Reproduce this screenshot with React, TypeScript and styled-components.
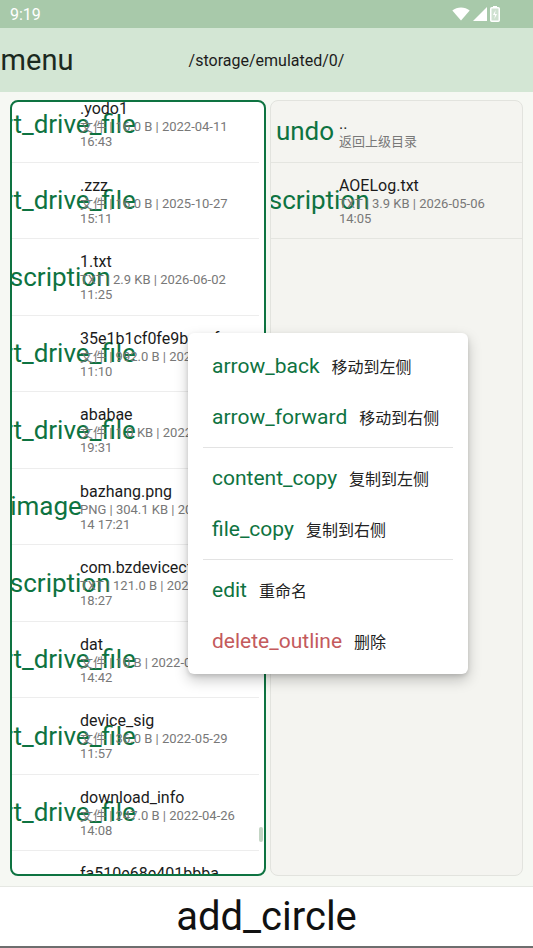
import React, { useEffect, useRef } from "react";
import styled, { createGlobalStyle } from "styled-components";

const GREEN = "#0e7341";
const RED = "#c45a5c";
const FONT = `Roboto, "Noto Sans CJK SC", "Noto Sans", sans-serif`;

const GlobalStyle = createGlobalStyle`
  html, body { margin: 0; padding: 0; }
  body { font-family: ${FONT}; background: #f6f8f3; }
  * { box-sizing: border-box; }
`;

const Screen = styled.div`
  position: relative;
  width: 533px;
  height: 948px;
  display: flex;
  flex-direction: column;
  overflow: hidden;
  background: #f6f8f3;
`;

const StatusBar = styled.div`
  flex: none;
  height: 28px;
  display: flex;
  align-items: center;
  justify-content: space-between;
  padding: 0 33px 0 10px;
  background: #a8c9aa;
  color: #fff;
`;
const Clock = styled.span`
  font-size: 16px;
`;
const StatusIcons = styled.div`
  display: flex;
  align-items: center;
  gap: 3px;
`;

const TopBar = styled.div`
  flex: none;
  height: 64px;
  display: grid;
  grid-template-columns: 74px 1fr 74px;
  align-items: center;
  background: #d3e6d4;
`;
const NavIcon = styled.span`
  display: flex;
  justify-content: center;
  white-space: nowrap;
  font-size: 29px;
  color: #1b2a1e;
`;
const PathTitle = styled.div`
  text-align: center;
  font-size: 16px;
  color: #1c1c1c;
`;

const Panes = styled.div`
  flex: 1;
  min-height: 0;
  display: grid;
  grid-template-columns: 256px 253px;
  gap: 4px;
  padding: 8px 10px 10px;
`;
const Pane = styled.div<{ $active?: boolean }>`
  position: relative;
  min-height: 0;
  overflow: hidden;
  border-radius: 8px;
  background: ${(p) => (p.$active ? "#fff" : "#f4f4f0")};
  border: ${(p) => (p.$active ? `2px solid ${GREEN}` : "1px solid #e2e3de")};
`;
const Scroller = styled.div<{ $gutter?: number }>`
  height: 100%;
  overflow-y: auto;
  scrollbar-width: none;
  padding-right: ${(p) => p.$gutter ?? 0}px;
  &::-webkit-scrollbar {
    display: none;
  }
`;
const ScrollThumb = styled.div`
  position: absolute;
  right: 1px;
  top: 725px;
  width: 4px;
  height: 15px;
  border-radius: 2px;
  background: #c3d5c4;
`;

const Row = styled.div<{ $line: string }>`
  display: flex;
  align-items: center;
  padding: 12.25px 0;
  border-bottom: 1px solid ${(p) => p.$line};
`;
const IconSlot = styled.span`
  flex: none;
  width: 44px;
  margin: 0 12px;
  display: flex;
  justify-content: center;
  white-space: nowrap;
  font-size: 26px;
  line-height: 1;
  color: ${GREEN};
`;
const Info = styled.div`
  flex: 1;
  min-width: 0;
`;
const FileName = styled.div`
  font-size: 16px;
  line-height: 21px;
  color: #1b1b1b;
  white-space: nowrap;
  overflow: hidden;
`;
const Meta = styled.div`
  font-size: 13px;
  line-height: 15px;
  color: #787878;
  white-space: nowrap;
`;

const Menu = styled.div`
  position: absolute;
  left: 188px;
  top: 333px;
  width: 280px;
  padding: 8px 0;
  border-radius: 6px;
  background: #fff;
  box-shadow: 0 6px 14px rgba(0, 0, 0, 0.22), 0 2px 4px rgba(0, 0, 0, 0.12);
  z-index: 10;
`;
const MenuItem = styled.div`
  height: 50.5px;
  display: flex;
  align-items: center;
  gap: 12px;
  padding: 0 24px;
`;
const MenuIcon = styled.span<{ $danger?: boolean }>`
  white-space: nowrap;
  font-size: 21px;
  color: ${(p) => (p.$danger ? RED : GREEN)};
`;
const MenuLabel = styled.span`
  font-size: 16px;
  color: #222;
`;
const MenuDivider = styled.div`
  height: 1px;
  margin: 5px 15px;
  background: #e3e3e3;
`;

const BottomBar = styled.div`
  flex: none;
  height: 62px;
  display: flex;
  align-items: center;
  justify-content: center;
  background: #fff;
  border-top: 1px solid #e6e8e3;
  border-bottom: 2px solid #6e6e6e;
`;
const FabIcon = styled.span`
  font-size: 40px;
  line-height: 1;
  color: #111;
`;

type FileEntry = { icon: string; name: string; meta: string[] };

const leftFiles: FileEntry[] = [
  { icon: "insert_drive_file", name: ".yodo1", meta: ["文件 | 16.0 B | 2022-04-11", "16:43"] },
  { icon: "insert_drive_file", name: ".zzz", meta: ["文件 | 16.0 B | 2025-10-27", "15:11"] },
  { icon: "description", name: "1.txt", meta: ["TXT | 2.9 KB | 2026-06-02", "11:25"] },
  { icon: "insert_drive_file", name: "35e1b1cf0fe9baecfaceae", meta: ["文件 | 992.0 B | 2024-03-18", "11:10"] },
  { icon: "insert_drive_file", name: "ababae", meta: ["文件 | 1.0 KB | 2022-07-15", "19:31"] },
  { icon: "image", name: "bazhang.png", meta: ["PNG | 304.1 KB | 2025-06-", "14 17:21"] },
  { icon: "description", name: "com.bzdevicecfg.txt", meta: ["TXT | 121.0 B | 2025-03-02", "18:27"] },
  { icon: "insert_drive_file", name: "dat", meta: ["文件 | 10 B | 2022-08-16", "14:42"] },
  { icon: "insert_drive_file", name: "device_sig", meta: ["文件 | 36.0 B | 2022-05-29", "11:57"] },
  { icon: "insert_drive_file", name: "download_info", meta: ["文件 | 247.0 B | 2022-04-26", "14:08"] },
  { icon: "insert_drive_file", name: "fa510e68e401bbba", meta: ["文件 | 32.0 B | 2022-04-26", "14:08"] },
];

const rightFiles: FileEntry[] = [
  { icon: "undo", name: "..", meta: ["返回上级目录"] },
  { icon: "description", name: "AOELog.txt", meta: ["TXT | 3.9 KB | 2026-05-06", "14:05"] },
];

const menuGroups = [
  [
    { icon: "arrow_back", label: "移动到左侧" },
    { icon: "arrow_forward", label: "移动到右侧" },
  ],
  [
    { icon: "content_copy", label: "复制到左侧" },
    { icon: "file_copy", label: "复制到右侧" },
  ],
  [
    { icon: "edit", label: "重命名" },
    { icon: "delete_outline", label: "删除", danger: true },
  ],
];

const FileRow = ({ file, line }: { file: FileEntry; line: string }) => (
  <Row $line={line}>
    <IconSlot>{file.icon}</IconSlot>
    <Info>
      <FileName>{file.name}</FileName>
      {file.meta.map((m, i) => (
        <Meta key={i}>{m}</Meta>
      ))}
    </Info>
  </Row>
);

const StatusGlyphs = () => (
  <StatusIcons>
    <svg width="18" height="14" viewBox="0 0 18 14">
      <path d="M9 13.5 L0.3 3.6 A13.5 13.5 0 0 1 17.7 3.6 Z" fill="#fff" />
    </svg>
    <svg width="14" height="14" viewBox="0 0 14 14">
      <path d="M14 0 L14 14 L0 14 Z" fill="#fff" />
    </svg>
    <svg width="10" height="16" viewBox="0 0 10 16">
      <rect x="3" y="0" width="4" height="2" fill="#fff" />
      <rect x="0.75" y="1.75" width="8.5" height="13.5" rx="1" fill="rgba(255,255,255,0.45)" stroke="#fff" strokeWidth="1.5" />
      <path d="M5.6 4 L3 9 H5 L4.4 13 L7 8 H5 Z" fill="#fff" />
    </svg>
  </StatusIcons>
);

export default function App() {
  const leftRef = useRef<HTMLDivElement>(null);

  useEffect(() => {
    if (leftRef.current) leftRef.current.scrollTop = 16;
  }, []);

  return (
    <Screen>
      <GlobalStyle />
      <StatusBar>
        <Clock>9:19</Clock>
        <StatusGlyphs />
      </StatusBar>
      <TopBar>
        <NavIcon>menu</NavIcon>
        <PathTitle>/storage/emulated/0/</PathTitle>
        <span />
      </TopBar>
      <Panes>
        <Pane $active>
          <Scroller ref={leftRef} $gutter={5}>
            {leftFiles.map((f) => (
              <FileRow key={f.name} file={f} line="#ededed" />
            ))}
          </Scroller>
          <ScrollThumb />
        </Pane>
        <Pane>
          <Scroller>
            {rightFiles.map((f) => (
              <FileRow key={f.name} file={f} line="#e4e5e0" />
            ))}
          </Scroller>
        </Pane>
      </Panes>
      <BottomBar>
        <FabIcon>add_circle</FabIcon>
      </BottomBar>
      <Menu>
        {menuGroups.map((group, gi) => (
          <React.Fragment key={gi}>
            {gi > 0 && <MenuDivider />}
            {group.map((item) => (
              <MenuItem key={item.icon}>
                <MenuIcon $danger={"danger" in item && item.danger}>{item.icon}</MenuIcon>
                <MenuLabel>{item.label}</MenuLabel>
              </MenuItem>
            ))}
          </React.Fragment>
        ))}
      </Menu>
    </Screen>
  );
}
